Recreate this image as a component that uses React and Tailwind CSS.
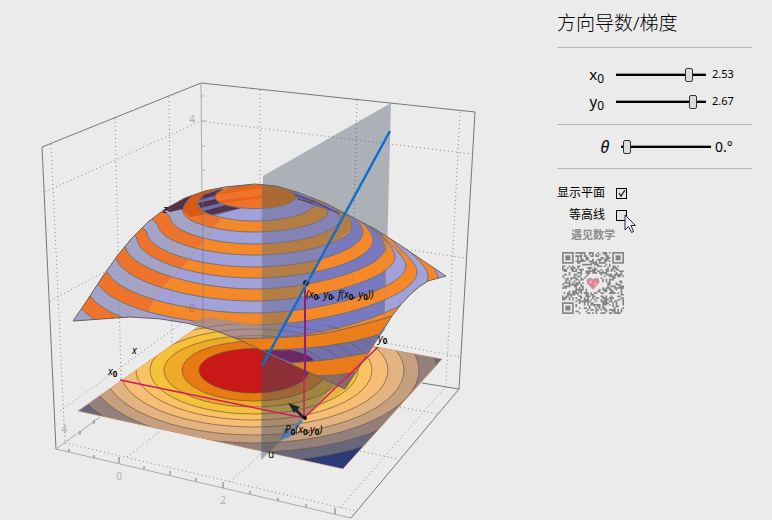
import { useState } from "react";

const SURFACE =
  "M73 321L88 299L103 276L118 255L132 238L148 222L165 209L185 198L205 191L225 187L255 184L276 186L297 192L325 203L350 216L375 229L400 245L425 262L446 276L428 281Q410 291 392 316L378 338L345 389L300 368L240 340Q190 318 130 317Z";
const FLOOR = "M78 411L343 469L442 359L212 317Z";

// [left x, left y, bottom x, bottom y, right x, right y], outermost ring first
const rings = [
  [60, 336, 262, 377, 460, 330],
  [72, 324, 262, 364, 450, 312],
  [82, 309, 260, 350, 438, 278],
  [91, 297, 258, 338, 428, 276],
  [99, 285, 254, 325, 417, 272],
  [108, 273, 254, 313, 406, 266],
  [117, 260, 254, 301, 395, 257],
  [126, 248, 254, 289, 385, 248],
  [137, 238, 254, 278, 373, 240],
  [147, 232, 254, 267, 363, 232],
  [158, 225, 254, 255, 352, 226],
  [170, 217, 254, 244, 340, 219],
  [183, 211, 254, 232, 328, 212],
  [197, 203, 254, 221, 314, 204],
  [215, 197, 255, 208, 296, 197],
];

const ringPath = ([lx, ly, bx, by, rx, ry], i) => {
  const kx = i > 7 ? 0.52 : 0.44;
  const ky = i > 7 ? 0.52 : 0.48;
  // the outer rings meet the silhouette at a slant
  const slant = Math.max(0, 8 - i) * 4;
  return `M${lx} ${ly}C${lx + slant} ${ly + (by - ly) * ky + slant * 0.3} ${bx - (bx - lx) * kx} ${by} ${bx} ${by}C${bx + (rx - bx) * kx} ${by} ${rx} ${ry + (by - ry) * ky} ${rx} ${ry}C${rx} ${ry - 7} ${rx - 8} ${ry - 15} ${rx - 22} ${ry - 28}L${rx - 50} ${ry - 75}L${lx - 20} ${ly - 60}V${ly - 20}Z`;
};

// [x radius, lower y radius, fill], outermost level first
const levels = [
  [196, 92, "#66667c"],
  [183, 82, "#93807c"],
  [165, 73, "#c4a080"],
  [150, 65, "#e3b381"],
  [134, 57, "#f5bd75"],
  [118, 50, "#f9c262"],
  [104, 44, "#f5c23a"],
  [90, 37, "#edab28"],
  [72, 31, "#e87a14"],
  [55, 23, "#c81818"],
];

const levelPath = (rx, ry) =>
  `M${254 - rx} 370A${rx} ${ry} 0 0 0 ${254 + rx} 370A${rx} ${ry * 0.93} 0 0 0 ${254 - rx} 370Z`;

function Bands({ orange, violet, clip }) {
  return (
    <g clipPath={clip}>
      <path d={SURFACE} fill={violet} />
      {rings.map((ring, i) => (
        <path
          key={i}
          d={ringPath(ring, i)}
          fill={i % 2 === 0 ? orange : violet}
          stroke="#77716f"
        />
      ))}
    </g>
  );
}

function GridLines() {
  return (
    <path
      d="M51 144L65 444M115 118L121 381M169 97L172 342M260 90V330M357 100L351 345M460 112L446 384M45 192L201 121L472 154M50 301L203 219L465 258M60 411L203 308L460 357M65 443L355 511M127 457L162 430M230 482L262 453M340 508L446 386M360 451L398 459M400 407L437 414"
      fill="none"
      stroke="#858585"
      strokeDasharray="1 3"
    />
  );
}

function Sub() {
  return (
    <tspan dy="2" fontSize="8" fontWeight="bold" fontStyle="normal">
      0
    </tspan>
  );
}

function Plot() {
  return (
    <svg
      viewBox="0 0 557 520"
      className="block w-full h-auto"
      fontFamily="'Noto Sans', sans-serif"
      fontSize="10"
    >
      <clipPath id="surface">
        <path d={SURFACE} />
      </clipPath>
      <clipPath id="floor">
        <path d={FLOOR} />
      </clipPath>
      <clipPath id="shade">
        <path d="M0 150H228L220 220L184 265L157 293L140 330H0Z" />
      </clipPath>
      <clipPath id="behind">
        <path d="M262 365L308 280L330 245L352 228L345 200L387 220L384 335L345 395Z" />
      </clipPath>
      <clipPath id="front">
        <path d="M262 180H352V228L330 245L308 280L262 365Z" />
      </clipPath>
      <clipPath id="sheet">
        <path d="M190 322L262 326Q330 322 352 329L392 316L345 389L240 340Z" />
      </clipPath>

      <GridLines />
      <path
        d="M42 147L201 83L475 112L459 389L351 518M42 147L56 449M459 389L422 383"
        fill="none"
        stroke="#777"
      />
      <path
        d="M201 83L203 318M201 96h3M201 121h5M202 146h3M202 170h3M202 194h3M56 449L351 518M56 449L100 417"
        fill="none"
        stroke="#aaa"
      />
      <path
        d="M69 452v-3M94 458v-3M119 463v-6M144 469v-3M170 475v-4M196 481v-3M223 488v-6M250 494v-3M278 501v-3M306 507v-3M335 514v-6M94 424v-4M80 435v-4"
        stroke="#777"
      />
      <g fill="#b0b0b0" textAnchor="middle">
        <text x="192" y="123">4</text>
        <text x="64" y="433">4</text>
        <text x="119" y="480">0</text>
        <text x="223" y="504">2</text>
      </g>

      {/* contour map on the floor */}
      <g clipPath="url(#floor)">
        <path d={FLOOR} fill="#2d3a78" />
        {levels.map(([rx, ry, fill]) => (
          <path
            key={rx}
            d={levelPath(rx, ry)}
            fill={fill}
            stroke="#6b5238"
            strokeOpacity="0.65"
          />
        ))}
      </g>
      <path d={FLOOR} fill="none" stroke="#e2a978" strokeOpacity="0.6" />

      {/* cutting plane */}
      <path
        d="M263 176L391 103L385 330L305 417L261 460Z"
        fill="#405060"
        fillOpacity="0.37"
      />

      {/* surface */}
      <Bands orange="#f5892a" violet="#a3a1da" clip="url(#surface)" />
      <g clipPath="url(#surface)">
        <Bands orange="#f0742c" violet="#a3a3c6" clip="url(#shade)" />
        <Bands orange="#f5892a" violet="#7879be" clip="url(#behind)" />
        <Bands orange="#b47d45" violet="#8384b5" clip="url(#front)" />

        {/* the lower sheet lets the floor through */}
        <path d="M190 322L209 317L262 326V338H230Z" fill="#ad8f80" fillOpacity="0.9" />
        <path d="M262 326Q275 326 285 325L279 338H262Z" fill="#93826f" />
        <path d="M262 350Q330 350 378 335L367 353Q325 363 292 363Z" fill="#7370a8" />
        <path d="M262 350Q277 351 290 350Q311 354 314 361L292 363Z" fill="#6b2864" />
        <path d="M315 376Q336 376 358 372L345 389Z" fill="#8b6b66" />
        <g clipPath="url(#sheet)" fill="none" stroke="#54406a" strokeOpacity="0.35">
          {levels.map(([rx, ry]) => (
            <path key={rx} d={levelPath(rx, ry)} />
          ))}
        </g>
        <path
          d="M225 338Q300 340 340 330Q370 323 392 316L378 335Q330 350 262 350H225Z"
          fill="#ec7f1a"
        />
        <path d="M292 363Q330 361 367 353L358 372Q336 376 315 376Z" fill="#e97c18" />
        <path
          d="M225 338Q300 340 340 330Q370 323 392 316M262 350Q330 350 378 335M292 363Q330 361 367 353M315 376Q336 376 358 372"
          fill="none"
          stroke="#75665c"
        />

        {/* inside of the far wall above the cap */}
        <path d="M183 211L187 197L205 190L226 185L216 193L198 203L206 214L190 217Z" fill="#d85a14" />
        <path d="M170 212L163 209L185 197L192 196Q184 203 183 209Z" fill="#55334a" />
        <path d="M197 203L207 193L224 188Q214 193 216 198Q220 206 242 208L214 216Q199 211 197 203Z" fill="#7071ac" />
        <path
          d="M203 195L222 189L217 195L200 200ZM198 203L216 199L220 203L201 208ZM204 211L226 205L241 208L210 215Z"
          fill="#55334a"
        />
        <path d="M286 189L318 202L345 215L312 205L297 198Z" fill="#66659a" />
        <path
          d="M293 194L316 202L339 214M297 199L313 203"
          fill="none"
          stroke="#503454"
          strokeOpacity="0.8"
        />
        <path
          d="M183 211Q184 203 192 196M197 203Q198 211 214 216M197 203Q198 198 203 195"
          fill="none"
          stroke="#77716f"
        />
      </g>
      <ellipse cx="255" cy="197" rx="40" ry="11.5" fill="#f0742c" stroke="#77716f" />
      <g clipPath="url(#surface)">
        <path d="M217 194Q238 184 262 185V188L217 195ZM217 201L262 195V198L222 203Z" fill="#e8641a" />
        <path d="M262 185Q292 188 295 197Q292 207 262 208Z" fill="#a96a36" />
      </g>
      <path d={SURFACE} fill="none" stroke="#6c6460" />
      <g clipPath="url(#surface)" opacity="0.65">
        <GridLines />
        <path d="M203 190V332" stroke="#77707c" />
        <text x="189" y="312" fill="#a06040">0</text>
      </g>

      {/* plane in front of the map */}
      <path d="M262 351L345 389L305 417L262 460Z" fill="#405060" fillOpacity="0.1" />

      <g fill="none" stroke="#d01868" strokeWidth="1.5">
        <path d="M120 380L304 418L378 347" />
        <path d="M304 376V418" />
        <path d="M305 284V376" stroke="#8a1f86" strokeWidth="2" />
      </g>
      <path d="M262 366L390 131" stroke="#0f6fca" strokeWidth="2.5" />
      <path d="M304 418L296 410" stroke="#22262b" strokeWidth="2.5" />
      <path d="M288 403L300 407L294 413Z" fill="#22262b" />
      <path d="M302 420L292 431" stroke="#5681b8" strokeWidth="3" />
      <path d="M280 441L285 428L296 434Z" fill="#5681b8" />
      <path d="M280 441L285 428L289 431Z" fill="#55708e" />
      <circle cx="305" cy="418" r="2" fill="#111" />
      <ellipse cx="306" cy="283" rx="3" ry="3" fill="#222a34" />
      <path d="M304 287L309 278" stroke="#3d84c4" strokeWidth="1.5" />

      <g fill="#000" fontStyle="italic">
        <text x="163" y="213">z</text>
        <text x="132" y="354">x</text>
        <text x="108" y="375">
          x<Sub />
        </text>
        <text x="378" y="342">
          y<Sub />
        </text>
        <text x="268" y="458" fontStyle="normal">
          u
        </text>
        <text x="306" y="298">
          (x<Sub />
          <tspan dy="-2">, y</tspan>
          <Sub />
          <tspan dy="-2">, f(x</tspan>
          <Sub />
          <tspan dy="-2">, y</tspan>
          <Sub />
          <tspan dy="-2">))</tspan>
        </text>
        <text x="285" y="433">
          P<Sub />
          <tspan dy="-2">(x</tspan>
          <Sub />
          <tspan dy="-2">,y</tspan>
          <Sub />
          <tspan dy="-2">)</tspan>
        </text>
      </g>
    </svg>
  );
}

function Slider({ label, id, value, display, onChange, max, big }) {
  return (
    <div className="flex h-[27px] items-center">
      <label
        htmlFor={id}
        className={big ? "w-[52px] text-right text-base italic" : "w-[47px] text-right text-[15px]"}
      >
        {label}
      </label>
      <input
        id={id}
        type="range"
        min="0"
        max={max}
        step="0.01"
        value={value}
        onChange={(e) => onChange(Number(e.target.value))}
        className={`mx-3 h-4 w-[90px] appearance-none bg-transparent bg-[linear-gradient(#999_33%,#000_33%)] bg-[length:100%_3px] bg-center bg-no-repeat [&::-webkit-slider-thumb]:h-[14px] [&::-webkit-slider-thumb]:w-2 [&::-webkit-slider-thumb]:appearance-none [&::-webkit-slider-thumb]:rounded-xs [&::-webkit-slider-thumb]:border [&::-webkit-slider-thumb]:border-[#333] [&::-webkit-slider-thumb]:bg-[#dcdcdc] ${big ? "px-0.5" : ""}`}
      />
      <output htmlFor={id} className={big ? "-ml-2 text-sm" : "-ml-1.5 text-[11px]"}>
        {display}
      </output>
    </div>
  );
}

function Check({ label, id, checked, onChange, children }) {
  return (
    <div className="flex h-[22px] items-center">
      <label htmlFor={id} className="w-12 text-right text-xs whitespace-nowrap">
        {label}
      </label>
      <span className="relative ml-[11px] flex">
        <input
          id={id}
          type="checkbox"
          checked={checked}
          onChange={(e) => onChange(e.target.checked)}
          className="peer size-[11px] appearance-none border border-black bg-[#e4e4e4]"
        />
        <svg
          viewBox="0 0 11 11"
          className="pointer-events-none absolute inset-0 hidden size-[11px] peer-checked:block"
        >
          <path d="M3 5L5 8L9 2" fill="none" stroke="#222" strokeWidth="1.3" />
        </svg>
        {children}
      </span>
    </div>
  );
}

const QR_SIZE = 37;

function isFinder(x, y) {
  const spots = [
    [0, 0],
    [QR_SIZE - 7, 0],
    [0, QR_SIZE - 7],
  ];
  return spots.some(
    ([a, b]) => x >= a - 1 && x <= a + 7 && y >= b - 1 && y <= b + 7
  );
}

function buildModules() {
  let seed = 2053;
  let d = "";
  for (let y = 0; y < QR_SIZE; y++) {
    for (let x = 0; x < QR_SIZE; x++) {
      seed = (seed * 16807) % 2147483647;
      const heart = Math.hypot(x - 18, y - 18) < 5.5;
      if (seed % 100 < 48 && !isFinder(x, y) && !heart) {
        d += `M${x} ${y}h1v1h-1z`;
      }
    }
  }
  return d;
}

const modules = buildModules();

function QrCode() {
  return (
    <svg viewBox="0 0 37 37" className="size-[62px]" role="img">
      <path d={modules} fill="#858585" />
      {[
        [0, 0],
        [30, 0],
        [0, 30],
      ].map(([x, y]) => (
        <g key={`${x}-${y}`}>
          <rect x={x + 0.5} y={y + 0.5} width="6" height="6" fill="none" stroke="#858585" />
          <rect x={x + 2} y={y + 2} width="3" height="3" fill="#858585" />
        </g>
      ))}
      <path
        d="M18.5 22.5L15.4 19.3Q14 17.2 15.4 15.8Q17.2 14.6 18.5 16.3Q20 14.6 21.7 15.8Q23 17.2 21.6 19.3Z"
        fill="#d98a9e"
      />
      <path d="M16.3 17.2h1.5v1.5h-1.5zM19.3 18.3h1.5v1.5h-1.5z" fill="#efb9a8" />
    </svg>
  );
}

export default function App() {
  const [x0, setX0] = useState(2.53);
  const [y0, setY0] = useState(2.67);
  const [theta, setTheta] = useState(0);
  const [plane, setPlane] = useState(true);
  const [contour, setContour] = useState(false);

  return (
    <main className="flex min-h-screen items-start bg-[#ebebeb] font-['Noto_Sans','Noto_Sans_CJK_SC',sans-serif] text-black">
      <div className="min-w-0 flex-1">
        <Plot />
      </div>
      <aside className="w-[215px] pr-5">
        <h1 className="flex h-12 items-center border-b border-[#b8b8b8] text-[19px] font-light">
          方向导数/梯度
        </h1>
        <section className="border-b border-[#b8b8b8] pt-[13px] pb-[9px]">
          <Slider
            id="x0"
            label={<>x<sub className="text-xs">0</sub></>}
            value={x0}
            max="3"
            display={x0.toFixed(2)}
            onChange={setX0}
          />
          <Slider
            id="y0"
            label={<>y<sub className="text-xs">0</sub></>}
            value={y0}
            max="3"
            display={y0.toFixed(2)}
            onChange={setY0}
          />
        </section>
        <section className="border-b border-[#b8b8b8] py-2">
          <Slider
            id="theta"
            label="θ"
            big
            value={theta}
            max="360"
            display={`${theta}.°`}
            onChange={setTheta}
          />
        </section>
        <section className="pt-[13px]">
          <Check id="plane" label="显示平面" checked={plane} onChange={setPlane} />
          <Check id="contour" label="等高线" checked={contour} onChange={setContour}>
            <svg
              viewBox="0 0 13 20"
              className="pointer-events-none absolute top-1 left-2 h-5 w-[13px]"
            >
              <path
                d="M1 1V16L4.5 12.5L7.5 18.5L9.5 17.5L7 11.5H11.5Z"
                fill="#ececf2"
                stroke="#22263f"
              />
            </svg>
          </Check>
        </section>
        <figure className="flex w-[72px] flex-col items-center gap-2">
          <figcaption className="text-[11px] leading-[18px] font-bold whitespace-nowrap text-[#8c8c8c]">
            遇见数学
          </figcaption>
          <QrCode />
        </figure>
      </aside>
    </main>
  );
}
